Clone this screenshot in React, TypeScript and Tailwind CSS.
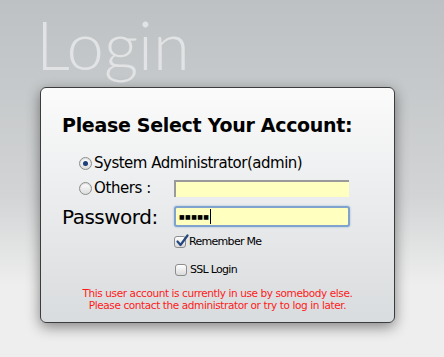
import React from 'react'

const ui = { fontFamily: '"DejaVu Sans", Verdana, sans-serif' }

function Radio({ checked }: { checked?: boolean }) {
  return (
    <span className="flex h-[13px] w-[13px] shrink-0 items-center justify-center rounded-full border border-[#8d8d8d] bg-gradient-to-b from-[#ffffff] to-[#dcdcdc] shadow-[inset_0_1px_1px_rgba(0,0,0,0.15)]">
      {checked && <span className="h-[5px] w-[5px] rounded-full bg-[#1c3f7a]" />}
    </span>
  )
}

function Check({ checked }: { checked?: boolean }) {
  return (
    <span className="relative flex h-[12px] w-[12px] shrink-0 rounded-[3px] border border-[#8d8d8d] bg-gradient-to-b from-[#ffffff] to-[#dadada]">
      {checked && (
        <svg viewBox="0 0 14 14" className="absolute -top-[3px] left-[0px] h-[14px] w-[14px]">
          <path d="M2.5 7.5 L5.5 11 L12.5 1.5" fill="none" stroke="#24477f" strokeWidth="2.2" strokeLinecap="round" strokeLinejoin="round" />
        </svg>
      )}
    </span>
  )
}

export default function App() {
  return (
    <div className="h-[357px] w-[444px] overflow-hidden bg-gradient-to-b from-[#bdc1c3] via-[#d2d4d5] via-55% to-[#eeeeee] to-80%">
      <h1
        className="ml-[36px] pt-[4px] text-[67px] font-light leading-[80px] text-[#e2e3e4]"
        style={{ fontFamily: 'Lato, "Open Sans", sans-serif' }}
      >
        Login
      </h1>
      <div
        className="ml-[40px] mt-[3px] h-[236px] w-[355px] rounded-[6px] border border-[#3c3c3c] bg-gradient-to-b from-[#fbfbfb] to-[#d9dcde] pl-[21px] pt-[25px] shadow-[0_4px_14px_rgba(0,0,0,0.45)]"
        style={ui}
      >
        <h2 className="text-[19px] font-bold leading-[24px] tracking-[-0.3px] text-black">Please Select Your Account:</h2>
        <div className="mt-[14px] grid grid-cols-[112px_176px] items-center text-black">
          <label className="col-span-2 flex h-[24px] items-center gap-[2px] pl-[17px] text-[15px]">
            <Radio checked />
            <span className="tracking-[-0.5px]">System Administrator(admin)</span>
          </label>
          <label className="flex h-[26px] items-center gap-[2px] pl-[17px] text-[15px]">
            <Radio />
            <span className="tracking-[-0.4px]">Others :</span>
          </label>
          <div className="h-[17px] w-[175px] border-l-2 border-t-2 border-[#9a9a9a] bg-[#ffffc0]" />
          <span className="flex h-[31px] items-center text-[20px] tracking-[-0.5px]">Password:</span>
          <div className="flex h-[21px] w-[176px] items-center rounded-[3px] border-2 border-[#7fa3cd] bg-[#ffffc0] pl-[3px] shadow-[0_0_2px_#8fb1d8]">
            <span className="text-[6px] leading-none tracking-[0.4px]">■■■■■</span>
            <span className="ml-[1px] h-[15px] w-[1px] bg-black" />
          </div>
          <span />
          <label className="flex h-[20px] items-center gap-[3px] text-[11px]">
            <Check checked />
            <span className="tracking-[-0.7px]">Remember Me</span>
          </label>
          <span />
          <label className="mt-[8px] flex h-[20px] items-center gap-[3px] pl-[1px] text-[11px]">
            <Check />
            <span className="tracking-[-0.7px]">SSL Login</span>
          </label>
        </div>
        <p className="-ml-[21px] mt-[7px] text-center text-[10.5px] leading-[12px] tracking-[-0.4px] text-[#ff1a1a]">
          This user account is currently in use by somebody else.
          <br />
          Please contact the administrator or try to log in later.
        </p>
      </div>
    </div>
  )
}
